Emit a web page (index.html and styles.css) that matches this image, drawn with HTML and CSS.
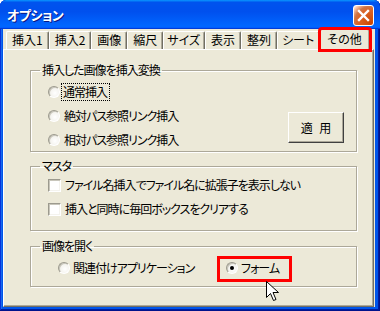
FILE: index.html
```html
<!DOCTYPE html>
<html lang="ja">
<head>
<meta charset="utf-8">
<link rel="stylesheet" href="styles.css">
</head>
<body>
<div class="window">
  <div class="titlebar">
    <span class="title">オプション</span>
    <span class="close">
      <svg width="13" height="13" viewBox="0 0 13 13"><path d="M2 2 L11 11 M11 2 L2 11" stroke="#fff" stroke-width="2.4" stroke-linecap="square"/></svg>
    </span>
  </div>
  <div class="client">
    <div class="tabs">
      <div class="tab">挿入1</div>
      <div class="tab">挿入2</div>
      <div class="tab">画像</div>
      <div class="tab">縮尺</div>
      <div class="tab tight">サイズ</div>
      <div class="tab">表示</div>
      <div class="tab">整列</div>
      <div class="tab tight1">シート</div>
      <div class="tab selected">その他</div>
    </div>
    <div class="panel">
      <fieldset class="group g1">
        <legend>挿入した画像を挿入変換</legend>
        <div class="g1-body">
          <div class="options">
            <div class="opt"><span class="radio"></span><span class="txt focus">通常挿入</span></div>
            <div class="opt"><span class="radio"></span><span class="txt">絶対パス参照リンク挿入</span></div>
            <div class="opt"><span class="radio"></span><span class="txt">相対パス参照リンク挿入</span></div>
          </div>
          <div class="btn">適 用</div>
        </div>
      </fieldset>
      <fieldset class="group g2">
        <legend>マスタ</legend>
        <div class="checks">
          <div class="opt"><span class="check"></span><span class="txt">ファイル名挿入でファイル名に拡張子を表示しない</span></div>
          <div class="opt"><span class="check"></span><span class="txt">挿入と同時に毎回ボックスをクリアする</span></div>
        </div>
      </fieldset>
      <fieldset class="group g3">
        <legend>画像を開く</legend>
        <div class="g3-row">
          <div class="opt opt-wide"><span class="radio"></span><span class="txt">関連付けアプリケーション</span></div>
          <div class="opt marked"><span class="radio on"></span><span class="txt">フォーム</span></div>
        </div>
      </fieldset>
    </div>
  </div>
  <svg class="cursor" width="14" height="21" viewBox="0 0 14 21">
    <path d="M0.5 0.5 L0.5 16.5 L4.5 12.5 L7.5 19.5 L10 18.5 L7 11.5 L12.5 11.5 Z" fill="#fff" stroke="#000" stroke-width="1" stroke-linejoin="miter"/>
  </svg>
</div>
</body>
</html>
```

FILE: styles.css
```css
html, body {
  margin: 0;
  padding: 0;
  background: #fff;
}
.window {
  position: relative;
  width: 380px;
  height: 311px;
  background: #0055ea;
  border-radius: 6px 6px 0 0;
  box-shadow: inset -1px -1px #00138c, inset 1px 1px #0831d9, inset -2px -2px #001ea0, inset 2px 2px #166aee;
  display: flex;
  flex-direction: column;
  overflow: hidden;
  font-family: "Noto Sans CJK JP", sans-serif;
  font-size: 12px;
  font-feature-settings: "palt";
  color: #000;
}
.titlebar {
  height: 29px;
  flex: none;
  display: flex;
  align-items: center;
  justify-content: space-between;
  padding: 0 6px 0 7px;
  background: linear-gradient(180deg, #0997ff, #0053ee 8%, #0050ee 40%, #0066ff 88%, #0066ff 93%, #005bff 95%, #003dd7 96%, #003dd7);
  border-radius: 6px 6px 0 0;
}
.title {
  color: #fff;
  font-weight: bold;
  font-size: 13px;
  line-height: 16px;
  letter-spacing: -0.5px;
  text-shadow: 1px 1px #0a1883;
  margin-top: 1px;
}
.close {
  width: 19px;
  height: 19px;
  border: 1px solid #fff;
  border-radius: 3px;
  background: radial-gradient(circle at 90% 90%, #cc4600 0%, #dc6527 55%, #cd7546 70%, #ffccb2 90%, #fff 100%);
  display: flex;
  align-items: center;
  justify-content: center;
  margin-top: 2px;
}
.client {
  flex: 1;
  margin: 0 5px 4px 3px;
  background: #ece9d8;
  display: flex;
  flex-direction: column;
}
.tabs {
  height: 20px;
  flex: none;
  display: flex;
  align-items: flex-end;
  padding-left: 3px;
  position: relative;
  z-index: 1;
}
.tab {
  flex: none;
  white-space: nowrap;
  height: 17px;
  line-height: 16px;
  padding: 0 5px;
  border-top: 1px solid #fff;
  border-left: 1px solid #fff;
  border-right: 1px solid #716f64;
  box-shadow: inset -1px 0 #aca899;
  border-radius: 2px 2px 0 0;
  box-sizing: content-box;
}
.tab.tight {
  padding: 0 4px 0 3px;
}
.tab.tight1 {
  padding: 0 5px 0 4px;
}
.tab.selected {
  height: 20px;
  padding: 0 7px 0 6px;
  margin: 0 0 -1px 0;
  background: #ece9d8;
  line-height: 18px;
  outline: 3px solid #f00;
  outline-offset: -1px;
}
.panel {
  flex: 1;
  border-top: 1px solid #fff;
  border-left: 1px solid #fff;
  border-right: 1px solid #716f64;
  border-bottom: 1px solid #716f64;
  box-shadow: inset -1px -1px #aca899;
  padding: 13px 0 0 26px;
  margin-right: 1px;
  letter-spacing: -1px;
}
.group {
  width: 325px;
  margin: 0;
  padding: 0;
  border: 1px solid #aca899;
  box-shadow: inset 1px 1px #fff, 1px 1px #fff;
  min-width: 0;
}
.group legend {
  padding: 0 2px;
  margin-left: 9px;
  line-height: 14px;
  height: 14px;
}
.g1-body {
  display: flex;
  justify-content: space-between;
  align-items: flex-end;
  padding: 7px 12px 3px 17px;
}
.options, .checks {
  display: flex;
  flex-direction: column;
  gap: 8px;
}
.opt {
  display: flex;
  align-items: center;
  height: 16px;
  gap: 4px;
  white-space: nowrap;
}
.txt {
  line-height: 16px;
}
.focus {
  outline: 1px dotted #000;
  outline-offset: 0;
  padding: 0 2px 0 1px;
  margin-left: -2px;
}
.radio {
  width: 10px;
  height: 10px;
  border-radius: 50%;
  border: 1px solid;
  border-color: #9c9a8e #fff #fff #9c9a8e;
  background: radial-gradient(circle at 60% 60%, #fff 0%, #f4f3ee 55%, #dcdad0 100%);
  box-shadow: inset 1px 1px #c8c6bb;
  flex: none;
  position: relative;
}
.radio.on::after {
  content: "";
  position: absolute;
  left: 3px;
  top: 3px;
  width: 4px;
  height: 4px;
  border-radius: 50%;
  background: #000;
}
.check {
  width: 11px;
  height: 11px;
  border: 1px solid;
  border-color: #9c9a8e #fff #fff #9c9a8e;
  box-shadow: inset 1px 1px #c8c6bb, inset -1px -1px #f4f3ee;
  background: #fff;
  flex: none;
}
.btn {
  width: 54px;
  height: 29px;
  border: 1px solid;
  border-color: #fff #404040 #404040 #fff;
  box-shadow: inset -1px -1px #aca899;
  display: flex;
  align-items: center;
  justify-content: center;
  margin-bottom: 5px;
  letter-spacing: 2px;
  text-indent: 2px;
}
.g2 {
  margin-top: 7px;
}
.checks {
  padding: 4px 0 13px 17px;
}
.g3 {
  margin-top: 8px;
}
.g3-row {
  display: flex;
  align-items: flex-start;
  padding: 6px 0 7px 27px;
}
.opt-wide {
  width: 162px;
  margin-top: 1px;
  gap: 3px;
}
.marked {
  height: 16px;
  padding: 1px 10px 3px 6px;
  outline: 3px solid #f00;
  outline-offset: 0;
  gap: 3px;
}
.cursor {
  position: absolute;
  left: 266px;
  top: 281px;
}
```
